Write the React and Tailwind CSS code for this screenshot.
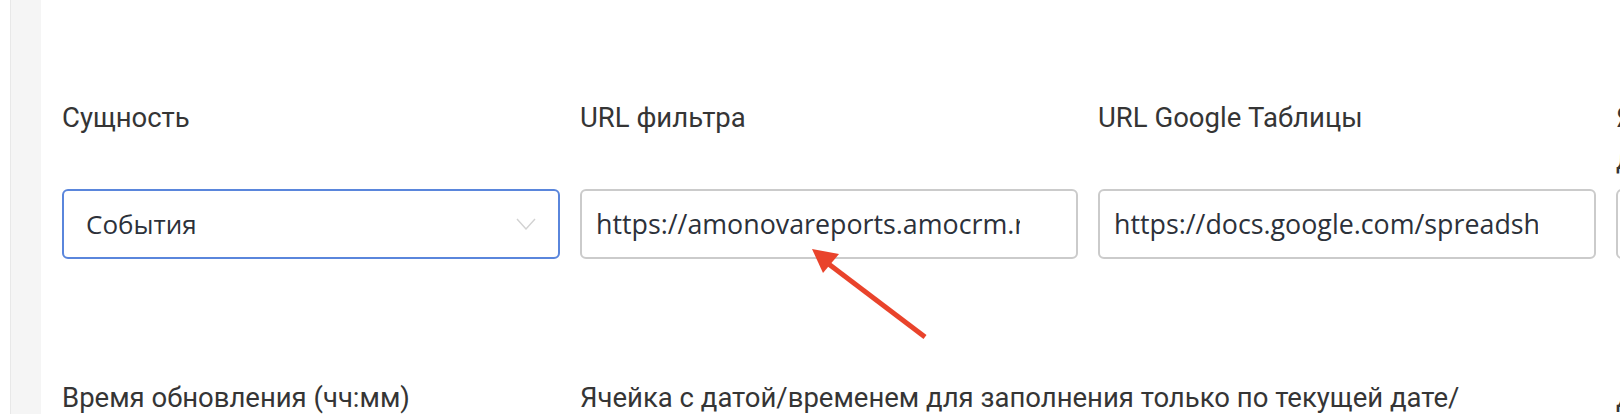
import React from "react";

const labelCls =
  "h-[84px] text-[27.5px] leading-[42px] text-[#353535] whitespace-nowrap font-['Roboto',sans-serif]";
const selectTextCls =
  "text-[26px] text-[#2c313a] font-['Open_Sans',sans-serif] whitespace-nowrap overflow-hidden";
const inputTextCls =
  "text-[26.8px] text-[#2c313a] font-['Open_Sans',sans-serif] whitespace-nowrap overflow-hidden";

function TextInput({ value }) {
  return (
    <div className="mt-[8px] flex h-[70px] items-center rounded-[6px] border-2 border-[#cbcbcb] bg-white pl-[14px] pr-[56px]">
      <div className={inputTextCls}>{value}</div>
    </div>
  );
}

export default function App() {
  return (
    <div className="relative flex h-[414px] w-[1620px] overflow-hidden bg-white">
      <div className="w-[10px] shrink-0" />
      <div className="w-[31px] shrink-0 border-l border-[#e8e8e8] bg-[#f5f5f5]" />
      <div className="min-w-0 flex-1 overflow-hidden pl-[21px] pt-[97px]">
        <div className="grid w-[2052px] grid-cols-[498px_498px_498px_498px] gap-x-[20px] gap-y-[118px]">
          <div>
            <div className={labelCls}>Сущность</div>
            <div className="mt-[8px] flex h-[70px] items-center justify-between rounded-[6px] border-2 border-[#5a86dc] bg-white pl-[22px] pr-[22px]">
              <div className={selectTextCls}>События</div>
              <svg width="20" height="12" viewBox="0 0 20 12" fill="none">
                <path d="M1 1 L10 11 L19 1" stroke="#d2d2d2" strokeWidth="1.4" />
              </svg>
            </div>
          </div>
          <div>
            <div className={labelCls}>URL фильтра</div>
            <TextInput value="https://amonovareports.amocrm.ru/events/list/?filter" />
          </div>
          <div>
            <div className={labelCls}>URL Google Таблицы</div>
            <TextInput value="https://docs.google.com/spreadsheets/d/1" />
          </div>
          <div>
            <div className={labelCls}>
              Ячейка с датой/временем
              <br />
              для обновления
            </div>
            <TextInput value="A1" />
          </div>

          <div>
            <div className={labelCls}>Время обновления (чч:мм)</div>
          </div>
          <div className="col-span-2">
            <div className={labelCls}>
              Ячейка с датой/временем для заполнения только по текущей дате/
            </div>
          </div>
          <div>
            <div className={labelCls}>Дата</div>
          </div>
        </div>
      </div>

      <svg
        className="pointer-events-none absolute left-0 top-0"
        width="1620"
        height="414"
        viewBox="0 0 1620 414"
      >
        <line x1="925" y1="337" x2="826" y2="262" stroke="#e9432b" strokeWidth="5" />
        <polygon points="812,249 839,254 823,273" fill="#e9432b" />
      </svg>
    </div>
  );
}
